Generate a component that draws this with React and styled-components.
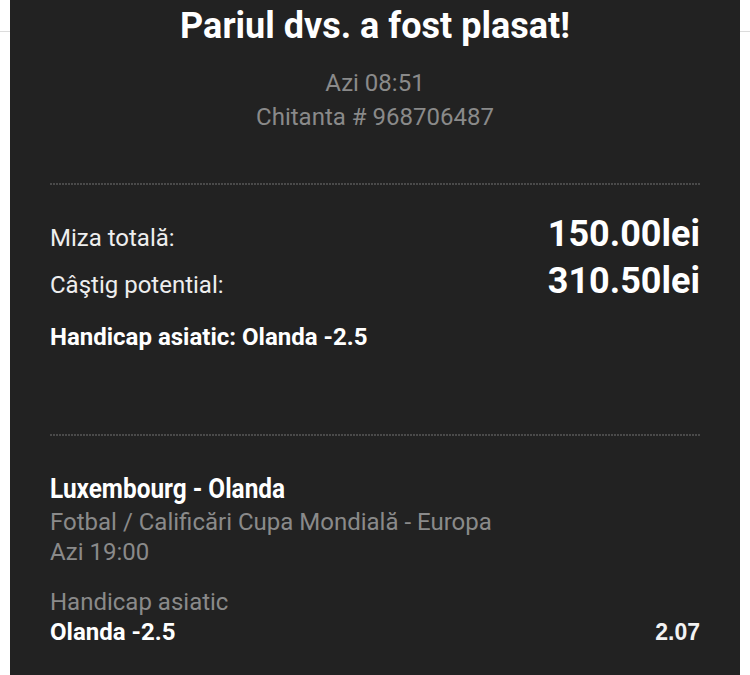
import styled, { createGlobalStyle } from 'styled-components';

const GlobalStyle = createGlobalStyle`
  html, body {
    margin: 0;
    padding: 0;
    background: #fff;
  }
  body {
    font-family: Roboto, "Noto Sans", sans-serif;
    overflow: hidden;
  }
`;

const Page = styled.div`
  height: 675px;
  overflow: hidden;
  padding: 0 10px;
  background: linear-gradient(#fff 0 31px, #dcdcdc 31px 32px, #fff 32px);
`;

const Panel = styled.section`
  background: #222;
  min-height: 100%;
  padding: 6px 40px 40px;
  color: #eee;
`;

const Title = styled.h1`
  margin: 0;
  font-size: 36px;
  line-height: 40px;
  font-weight: 700;
  color: #fff;
  text-align: center;
`;

const Meta = styled.div`
  margin-top: 20px;
  text-align: center;
  color: #8a8a8a;
  font-size: 24px;
  line-height: 34px;
`;

const Dots = styled.div`
  height: 2px;
  margin-top: ${(p) => p.$gap}px;
  background: repeating-linear-gradient(90deg, #4a4a4a 0 2px, transparent 2px 3px);
`;

const Totals = styled.div`
  margin-top: 25px;
`;

const SumRow = styled.div`
  display: flex;
  justify-content: space-between;
  align-items: baseline;
  height: 47px;
`;

const Label = styled.span`
  font-size: 24px;
  line-height: 24px;
  color: #eee;
`;

const Amount = styled.span`
  font-size: 36px;
  line-height: 48px;
  font-weight: 700;
  color: #fff;
`;

const Pick = styled.div`
  margin-top: 18px;
  font-size: 24px;
  line-height: 30px;
  font-weight: 700;
  color: #fff;
`;

const Event = styled.div`
  margin-top: 36px;
`;

const Match = styled.div`
  font-size: 28px;
  line-height: 34px;
  font-weight: 700;
  color: #fff;
  transform: scaleX(0.87);
  transform-origin: left center;
  white-space: nowrap;
`;

const Info = styled.div`
  font-size: 24px;
  line-height: 30px;
  color: #8a8a8a;
  margin-top: ${(p) => p.$gap || 0}px;
`;

const Selection = styled.div`
  display: flex;
  justify-content: space-between;
  align-items: baseline;
  font-size: 24px;
  line-height: 30px;
  font-weight: 700;
  color: #fff;
`;

const Odds = styled.span`
  font-family: "Liberation Sans", Arial, sans-serif;
  font-size: 23px;
  font-weight: 700;
  color: #f2f2f2;
`;

export default function App() {
  return (
    <>
      <GlobalStyle />
      <Page>
        <Panel>
          <Title>Pariul dvs. a fost plasat!</Title>
          <Meta>
            Azi 08:51
            <br />
            Chitanta # 968706487
          </Meta>

          <Dots $gap={49} />

          <Totals>
            <SumRow>
              <Label>Miza totală:</Label>
              <Amount>150.00lei</Amount>
            </SumRow>
            <SumRow>
              <Label>Câştig potential:</Label>
              <Amount>310.50lei</Amount>
            </SumRow>
          </Totals>
          <Pick>Handicap asiatic: Olanda -2.5</Pick>

          <Dots $gap={82} />

          <Event>
            <Match>Luxembourg - Olanda</Match>
            <Info $gap={1}>Fotbal / Calificări Cupa Mondială - Europa</Info>
            <Info>Azi 19:00</Info>
            <Info $gap={20}>Handicap asiatic</Info>
            <Selection>
              <span>Olanda -2.5</span>
              <Odds>2.07</Odds>
            </Selection>
          </Event>
        </Panel>
      </Page>
    </>
  );
}
